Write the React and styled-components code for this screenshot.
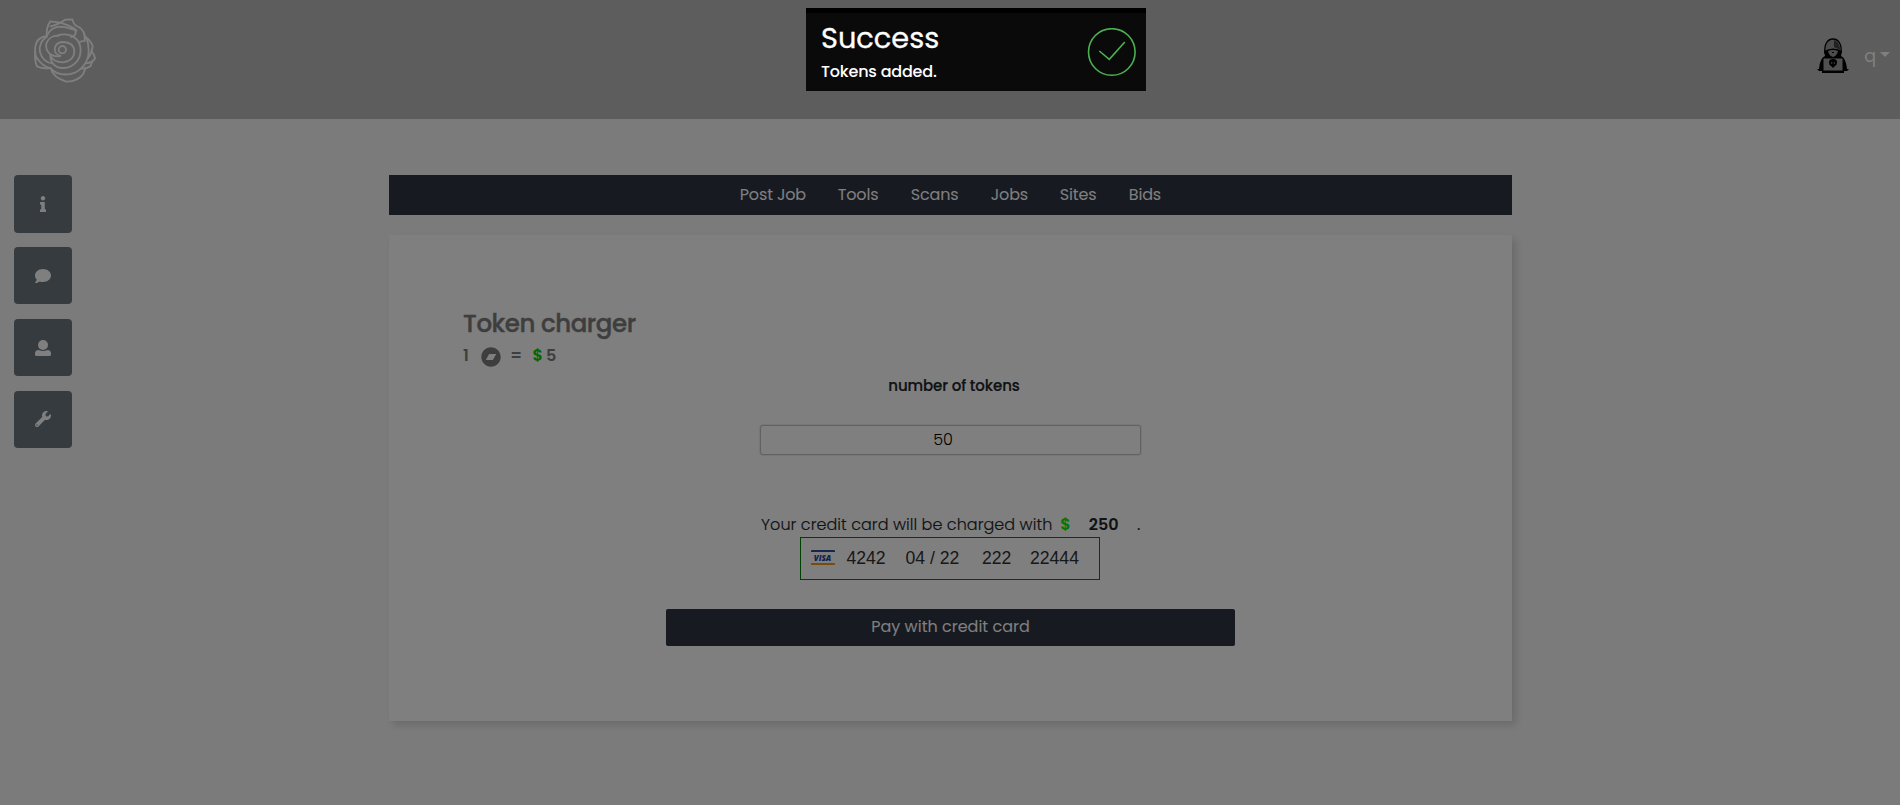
import React from "react";
import styled, { createGlobalStyle } from "styled-components";
import { FaInfo, FaComment, FaWrench, FaBandcamp } from "react-icons/fa";

const GlobalStyle = createGlobalStyle`
  * { box-sizing: border-box; }
  body {
    margin: 0;
    overflow: hidden;
    background: #f7f7f7;
    color: #212529;
    font-family: Poppins, Inter, "Liberation Sans", sans-serif;
    font-size: 16px;
    line-height: 24px;
  }
`;

const Page = styled.div`
  height: 805px;
  display: flex;
  flex-direction: column;
`;

const Header = styled.header`
  height: 119px;
  flex: none;
  display: flex;
  justify-content: space-between;
  align-items: flex-start;
  padding: 5px 10px 0 20px;
  background: #bababa;
`;

const UserMenu = styled.div`
  display: flex;
  align-items: center;
  padding-top: 32px;
  color: #fff;
  font-size: 17.5px;
`;

const UserName = styled.span`
  margin: 0 4px 0 15px;
  line-height: 38px;
`;

const Caret = styled.span`
  border: 5px solid transparent;
  border-top-color: #fff;
  border-bottom: 0;
  margin-bottom: 4px;
`;

const Body = styled.div`
  display: flex;
  padding-top: 56px;
`;

const Sidebar = styled.aside`
  width: 389px;
  padding-left: 14px;
  display: flex;
  flex-direction: column;
  gap: 14.4px;
`;

const SideButton = styled.button`
  width: 58px;
  height: 57.5px;
  padding: 0;
  border: 0;
  border-radius: 4px;
  background: #6c777e;
  color: #fff;
  display: flex;
  align-items: center;
  justify-content: center;
  font-size: 16px;
`;

const Main = styled.main`
  width: 1123px;
`;

const Nav = styled.nav`
  height: 40px;
  display: flex;
  justify-content: center;
  gap: 32px;
  background: #2e3442;
`;

const NavLink = styled.a`
  color: #fff;
  line-height: 40px;
  width: ${(p) => p.$width}px;
  white-space: nowrap;
  letter-spacing: -0.15px;
`;

const Card = styled.section`
  height: 486px;
  margin-top: 20px;
  padding: 74px 74px 0;
  background: #fff;
  box-shadow: 4px 4px 8px rgba(0, 0, 0, 0.14);
  display: flex;
  flex-direction: column;
  align-items: center;
`;

const Title = styled.h1`
  align-self: flex-start;
  margin: 0;
  font-size: 24.5px;
  line-height: 30px;
  font-weight: 500;
  color: #7c7c7c;
  letter-spacing: -0.42px;
  -webkit-text-stroke: 0.4px currentColor;
`;

const Rate = styled.div`
  align-self: flex-start;
  display: flex;
  align-items: center;
  margin-top: 5px;
  height: 24px;
  color: #7c7c7c;
  font-weight: 600;

  svg { margin: 1px 9.5px 0 12px; }
`;

const Dollar = styled.span`
  color: ${(p) => p.$color};
  font-weight: 600;
  margin-left: ${(p) => p.$left}px;
  margin-right: ${(p) => p.$right}px;
`;

const Label = styled.label`
  margin-top: 7.5px;
  padding-left: 7px;
  font-size: 15px;
  line-height: 20px;
  font-weight: 500;
  letter-spacing: -0.1px;
  -webkit-text-stroke: 0.2px currentColor;
`;

const TokenInput = styled.input`
  margin: 29.5px 0 0;
  width: 381px;
  height: 30px;
  padding: 0 15px 1.5px 0;
  border: 1px solid #c4c4c4;
  border-radius: 3px;
  background: #fff;
  box-shadow: 0 0 2px rgba(0, 0, 0, 0.25);
  color: #000;
  font: inherit;
  font-weight: 300;
  text-align: center;
`;

const Charge = styled.div`
  margin-top: 57.5px;
  height: 24px;
  width: 379px;
  display: flex;
  white-space: nowrap;
`;

const ChargeText = styled.span`
  width: 291.5px;
  font-weight: 300;
  letter-spacing: 0.04px;
  -webkit-text-stroke: 0.15px currentColor;
`;

const Amount = styled.strong`
  width: 30px;
  font-weight: 600;
  margin-right: 18.5px;
`;

const CreditCard = styled.div`
  margin-top: 0.5px;
  width: 300px;
  height: 43px;
  padding: 0 0 2px 10px;
  margin-right: 2px;
  border: 1px solid #008000;
  display: flex;
  align-items: center;
  font-family: "Liberation Sans", Arial, sans-serif;
  font-size: 17.6px;
  color: #303030;
`;

const CardField = styled.span`
  width: ${(p) => p.$width}px;
  white-space: nowrap;
`;

const PayButton = styled.button`
  margin-top: 29px;
  width: 569px;
  height: 37px;
  padding: 0 0 2px;
  border: 0;
  border-radius: 2px;
  background: #2e3442;
  color: #fff;
  font: inherit;
`;

const Overlay = styled.div`
  position: fixed;
  inset: 0;
  background: rgba(0, 0, 0, 0.5);
`;

const Toast = styled.div`
  position: absolute;
  top: 8px;
  left: 806px;
  width: 340px;
  height: 83px;
  padding: 0 10px 0 15px;
  border-top: 5px solid #000;
  background: #0a0a0a;
  color: #fff;
  display: flex;
  align-items: center;
  justify-content: space-between;
`;

const ToastTitle = styled.div`
  font-size: 28.8px;
  line-height: 34px;
  -webkit-text-stroke: 0.3px currentColor;
`;

const ToastMessage = styled.div`
  margin-top: 5px;
  font-weight: 500;
  line-height: 24px;
  letter-spacing: -0.2px;
`;

const RoseLogo = () => (
  <svg width="90" height="90" viewBox="0 0 270 270" fill="none" stroke="#fff" strokeWidth="5.5" strokeLinecap="round" strokeLinejoin="round">
    <circle cx="127" cy="134" r="11" />
    <path d="M121 153C107 149 102 138 105 127C109 115 119 111 130 111C149 112 162 121 163 138C163 158 149 170 130 172C111 172 96 164 91 150" />
    <path d="M121 153C112 155 104 154 98 151C82 145 74 128 80 113C85 100 99 91 116 92" />
    <path d="M112 92C138 82 164 93 174 108C187 129 183 156 168 172C149 193 113 195 99 176C94 170 91 160 91 150" />
    <path d="M80 93C88 74 102 65 123 65C144 66 157 74 166 75C170 86 164 95 153 96" />
    <path d="M80 93C79 75 84 58 91 49L122 53L135 44L157 43C160 57 167 63 176 66C189 72 196 85 194 108Q186 107 179 112" />
    <path d="M91 64Q102 62 122 53C141 62 155 61 170 77" />
    <path d="M80 93C59 96 49 107 46 124C43 147 50 160 52 163" />
    <path d="M80 95C62 108 56 124 60 142C65 162 81 174 99 176" />
    <path d="M46 140C44 158 46 174 51 184Q70 193 90 189" />
    <path d="M50 158C63 177 77 187 92 190C105 205 124 210 145 208C176 205 199 180 205 151C208 128 205 108 194 91" />
    <path d="M92 190C97 209 112 222 139 230C160 231 181 221 190 206L197 188" />
    <path d="M196 95C206 103 216 112 218 124Q216 143 204 160" />
    <path d="M214 138C220 145 224 151 225 161Q216 173 199 175" />
    <path d="M186 191Q203 190 212 183L216 170" />
  </svg>
);

const Avatar = () => (
  <svg width="32" height="37" viewBox="0 0 32 37">
    <path d="M8 15C7 7 10 1 16 1S25 7 24 15L22 17H10Z" fill="#999" stroke="#000" strokeWidth="1.3" />
    <path d="M17 2C22 4 23 9 23 12L17 9Z" fill="#444" />
    <path d="M7 13Q16 8 25 13L24 18Q29 20 30 31H2Q3 20 8 18Z" fill="#000" />
    <path d="M11 13Q16 11 21 13Q20 18 16 19Q12 18 11 13Z" fill="#999" />
    <path d="M15 14H17V15H15Z" fill="#000" />
    <rect x="6" y="20" width="20" height="13" rx="1" fill="#a0a0a0" stroke="#000" />
    <path d="M0 31H6V33H26V31H32L30 33H27V35H5V33H2Z" fill="#000" />
    <path d="M12 24Q12 21 16 21T20 24Q20 27 18 28L16 30L14 28Q12 27 12 24Z" fill="#000" />
    <path d="M14 24.5H15.3V25.5H14ZM16.7 24.5H18V25.5H16.7Z" fill="#bbb" />
  </svg>
);

const PersonIcon = () => (
  <svg width="16" height="16" viewBox="0 0 16 16" fill="currentColor">
    <circle cx="8" cy="5" r="5" />
    <path d="M3.5 10Q8 12 12.5 10Q16 10 16 13.5V14.5Q16 16 14.5 16H1.5Q0 16 0 14.5V13.5Q0 10 3.5 10Z" />
  </svg>
);

const VisaBadge = styled.span`
  width: 24px;
  height: 15px;
  margin-right: 12px;
  border-top: 2px solid #2b4f9c;
  border-bottom: 2px solid #f0980c;
  border-radius: 1px;
  color: #26439a;
  font: italic 800 8px/11px "Open Sans", sans-serif;
  text-align: center;
`;

const CheckIcon = () => (
  <svg width="49" height="49" viewBox="0 0 49 49" fill="none" stroke="#4caf50" strokeWidth="1.6">
    <circle cx="24.8" cy="24" r="23.3" />
    <path d="M12.3 23L22.3 31.3L37.8 14" />
  </svg>
);

const links = [
  ["Post Job", 66],
  ["Tools", 41],
  ["Scans", 48],
  ["Jobs", 37],
  ["Sites", 37],
  ["Bids", 32.5],
];

export default function App() {
  return (
    <>
      <GlobalStyle />
      <Page>
        <Header>
          <RoseLogo />
          <UserMenu>
            <Avatar />
            <UserName>q</UserName>
            <Caret />
          </UserMenu>
        </Header>
        <Body>
          <Sidebar>
            <SideButton aria-label="Info"><FaInfo /></SideButton>
            <SideButton aria-label="Messages"><FaComment /></SideButton>
            <SideButton aria-label="Profile"><PersonIcon /></SideButton>
            <SideButton aria-label="Settings"><FaWrench /></SideButton>
          </Sidebar>
          <Main>
            <Nav>
              {links.map(([name, width]) => (
                <NavLink key={name} $width={width}>{name}</NavLink>
              ))}
            </Nav>
            <Card>
              <Title>Token charger</Title>
              <Rate>
                1<FaBandcamp size={20} />=
                <Dollar $color="#0c0" $left={10.5} $right={3}>$</Dollar>5
              </Rate>
              <Label htmlFor="tokens">number of tokens</Label>
              <TokenInput id="tokens" defaultValue="50" />
              <Charge>
                <ChargeText>Your credit card will be charged with</ChargeText>
                <Dollar $color="#0e0" $left={8} $right={18}>$</Dollar>
                <Amount>250</Amount>
                <span>.</span>
              </Charge>
              <CreditCard>
                <VisaBadge>VISA</VisaBadge>
                <CardField $width={59}>4242</CardField>
                <CardField $width={76.5}>04 / 22</CardField>
                <CardField $width={48}>222</CardField>
                <CardField $width={50}>22444</CardField>
              </CreditCard>
              <PayButton>Pay with credit card</PayButton>
            </Card>
          </Main>
        </Body>
      </Page>
      <Overlay />
      <Toast>
        <div>
          <ToastTitle>Success</ToastTitle>
          <ToastMessage>Tokens added.</ToastMessage>
        </div>
        <CheckIcon />
      </Toast>
    </>
  );
}
